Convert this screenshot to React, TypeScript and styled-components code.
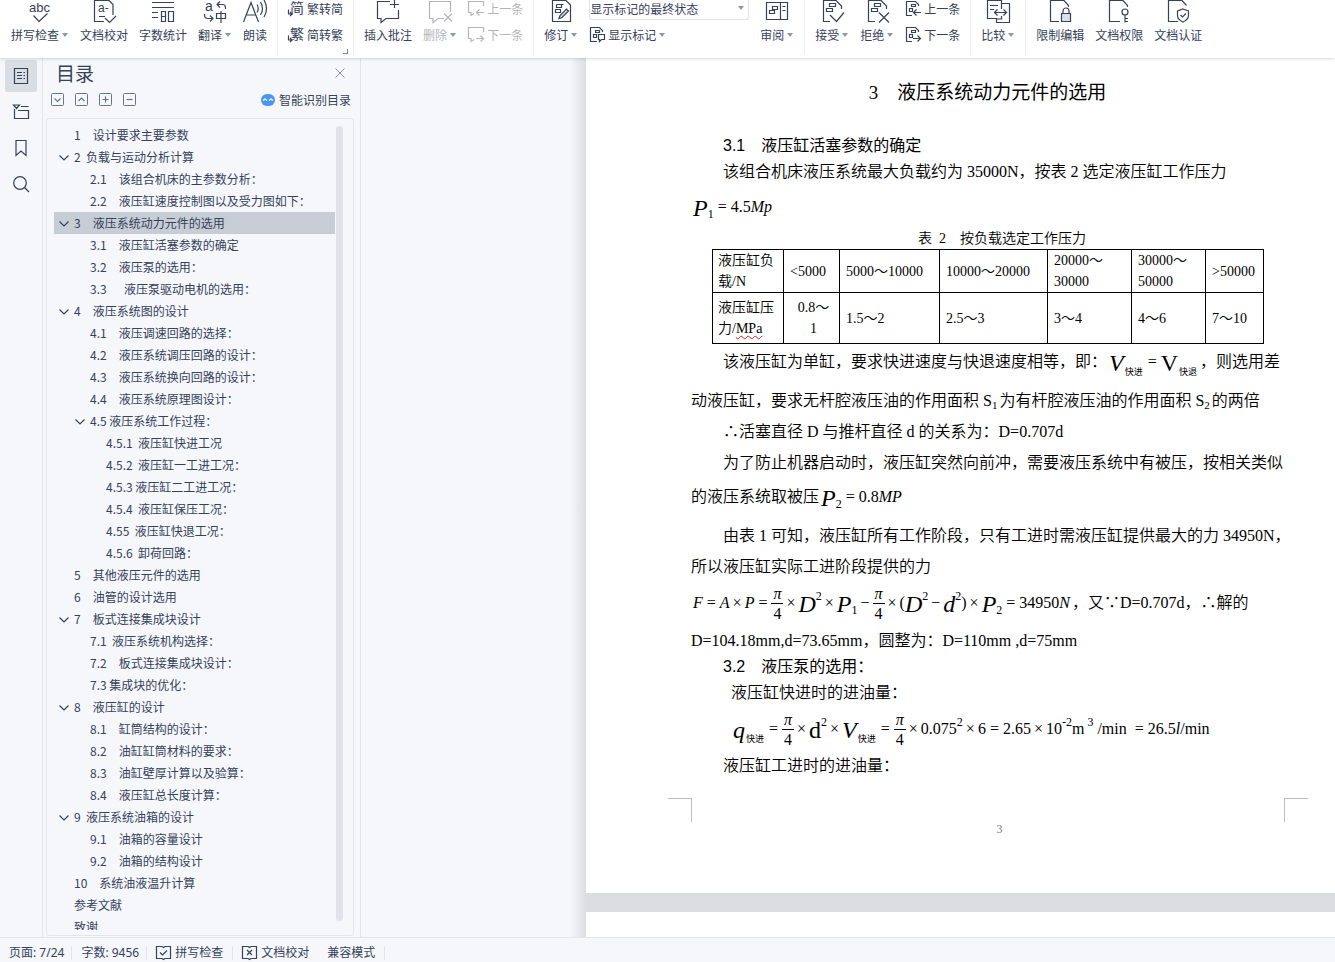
import React from 'react';
import styled, { createGlobalStyle, css } from 'styled-components';

const ink = '#36415a';
const faded = '#b4b5ba';
const surface = '#f5f7fa';
const line = '#e2e5ea';

const GlobalStyle = createGlobalStyle`
  *, *::before, *::after { box-sizing: border-box; }
  body {
    margin: 0;
    background: ${surface};
    font-family: "Noto Sans CJK SC", "Noto Sans", sans-serif;
    font-size: 12px;
    color: ${ink};
  }
  button, select { font: inherit; color: inherit; }
`;

const Window = styled.div`
  display: flex;
  flex-direction: column;
  height: 100vh;
  overflow: hidden;
`;

/* ---------- ribbon ---------- */

const Ribbon = styled.header`
  position: relative;
  z-index: 1;
  display: flex;
  flex: none;
  height: 58px;
  padding: 0 0 3px 1px;
  background: #fff;
  box-shadow: 0 1px 3px rgba(40, 50, 70, 0.18);
`;

const Group = styled.div<{ $last?: boolean }>`
  position: relative;
  display: flex;
  align-items: flex-start;
  gap: 11px;
  padding: 0 10px;
  border-right: ${(p) => (p.$last ? 'none' : '1px solid #eceef1')};
`;

const plainButton = css`
  border: 0;
  padding: 0;
  background: none;
  white-space: nowrap;
  cursor: pointer;
`;

const LargeButton = styled.button`
  ${plainButton}
  display: flex;
  flex-direction: column;
  align-items: center;
  gap: 3px;
  line-height: 16px;
  &:disabled { color: ${faded}; }
`;

const SmallButton = styled.button`
  ${plainButton}
  display: flex;
  align-items: center;
  gap: 3px;
  height: 17px;
  line-height: 17px;
  &:disabled { color: ${faded}; }
`;

const Stack = styled.div`
  display: flex;
  flex-direction: column;
  gap: 9px;
`;

const Label = styled.span`
  display: flex;
  align-items: center;
`;

const Caret = styled.span`
  width: 6px;
  margin: 0 1px 0 3px;
  border: 3px solid transparent;
  border-top: 4px solid #8d97ab;
  border-bottom: 0;
`;

const Launcher = styled.button`
  ${plainButton}
  position: absolute;
  right: 5px;
  bottom: 1px;
  width: 5px;
  height: 5px;
  border-right: 1px solid #7d8799;
  border-bottom: 1px solid #7d8799;
`;

const SelectBox = styled.label`
  display: flex;
  align-items: center;
  width: 160px;
  height: 20px;
  margin-bottom: -3px;
  padding: 0 3px 3px 0;
  border: 1px solid #dfe2e8;
  border-top: 0;
  border-radius: 0 0 3px 3px;
`;

const ModeSelect = styled.select`
  flex: 1;
  min-width: 0;
  height: 17px;
  padding: 0;
  border: 0;
  outline: 0;
  background: none;
  appearance: none;
  line-height: 17px;
`;

const Svg = styled.svg`
  display: block;
  flex: none;
  overflow: visible;
  fill: none;
  stroke: currentColor;
  stroke-width: 1.2;
  text { fill: currentColor; stroke: none; }
`;

const Big = ({ children }: { children: React.ReactNode }) => (
  <Svg width="24" height="24" viewBox="0 0 24 24" aria-hidden="true">{children}</Svg>
);
const Small = ({ children }: { children: React.ReactNode }) => (
  <Svg width="16" height="17" viewBox="0 0 16 17" aria-hidden="true">{children}</Svg>
);

const uiFace = '"Liberation Sans", sans-serif';
const cjkFace = '"Noto Sans CJK SC", sans-serif';

const revisionSheet = (
  <>
    <path d="M10 21.500H3.500V.5H16l5.500 5.500V9" />
    <path d="M9.500 3.500h6v3h-6zM6.500 8.500h6v3h-6z" />
  </>
);

const bigIcons: Record<string, React.ReactNode> = {
  spell: (
    <>
      <text x="1" y="12" fontSize="13" fontFamily={uiFace}>abc</text>
      <path d="M5.500 15.500l5.500 6 8.500-8" />
    </>
  ),
  proof: (
    <>
      <path d="M12 21.500H2.500V.5H17l4 4V15M7 16.500h6" />
      <text x="6" y="12" fontSize="12" fontFamily={uiFace}>a-</text>
      <path d="M13 18l4.500 4.500L24 16" />
    </>
  ),
  count: <path d="M1 2.500h22M1 7.500h22M1 12.500h6M1 17.500h6M10.500 11.500h4v10h-4zM10.500 16.500h4M17.500 11.500h5v10h-5z" />,
  translate: (
    <>
      <text x="2" y="11" fontSize="14" fontFamily={uiFace}>a</text>
      <path d="M14 4.500h5.500q3 0 3 3V9M17 1.500l-3 3 3 3M1.500 14v1q0 3.500 3.500 3.500h4.500M7 15.500l3 3-3 3" />
      <path d="M13.500 13.500h9v5h-9zM18 11v12" />
    </>
  ),
  read: (
    <>
      <path d="M.5 22L8 2.500 15.500 22M3.500 15h9" />
      <path d="M14 4.500q2.500 4 0 8M17.500 2q4 6.500 0 13M21 0q5 8.500 0 17" />
    </>
  ),
  comment: <path d="M14 1.500H1.500v17H5v4l5-4h12.500V10M18.500-1V8M14 4.500h9" />,
  remove: (
    <path d="M16 18.500h-6l-5 4v-4H1.500v-17h21V12M16 13.500l8 8M24 13.500l-8 8" />
  ),
  revise: (
    <>
      <path d="M17 .5H3.500v21h18V5zM7.500 4.500h7M7.500 4.500v3h5v-3M6.500 9.500h5v3h-5z" />
      <path d="M10 18.500l1-3 6.500-6.500 2 2-6.500 6.500z" fill="#d5d8df" />
    </>
  ),
  review: <path d="M1.500 2.500h21v17h-21zM15.500 2.500v17M7.500 6.500h5v3h-5zM4.500 10.500h5v3h-5zM17.500 6.500h3M17.500 10.500h3" />,
  accept: (
    <>
      {revisionSheet}
      <path d="M10 15l6.500 6.500L24 12.500" />
    </>
  ),
  reject: (
    <>
      {revisionSheet}
      <path d="M14 12.500l10 10M24 12.500l-10 10" />
    </>
  ),
  compare: (
    <path d="M15.500 3V.500h-14v18h9V22.500h13V3.500H15.500V9M15.500 16v3H10M4 5.500h8M4 9.500h4M8.500 12.500h12M11.500 9.500l-3 3 3 3M17.500 9.500l3 3-3 3" />
  ),
  lock: (
    <>
      <path d="M11 21.500H2.500V.5H16l4.500 5V7" />
      <path d="M13.500 13.500h9v8h-9z" fill="#dfe1e7" />
      <path d="M15 13.500v-2.500a3 3 0 016 0v2.500" />
    </>
  ),
  key: (
    <>
      <path d="M13 21.500H2.500V.5H16l4.500 5V7" />
      <circle cx="18" cy="12" r="3" />
      <path d="M18 15v7.500M18 18.500h3M18 21.500h3" />
    </>
  ),
  shield: (
    <>
      <path d="M12 21.500H2.500V.5H16l4.500 5" />
      <path d="M17 9l5.500 2v4.500q0 4-5.500 6.500-5.500-2.500-5.500-6.500V11z" />
      <path d="M14.500 15l2 2 3.500-3.500" />
    </>
  ),
};

const bubble = <path d="M6 13.500l-3 2v-3H.5V1.500h15V6" />;
const smallSheet = <path d="M7 15.500H1.500V1.500h9l3 3V6M6.500 4.500h4v2h-4zM4.500 8.500h3v3h-3z" />;

const smallIcons: Record<string, React.ReactNode> = {
  simp: (
    <>
      <text x="2" y="13" fontSize="14" fontFamily={cjkFace}>简</text>
      <path d="M.5 9.500v4.500h3.500M2 12l2 2-2 2" />
    </>
  ),
  trad: (
    <>
      <text x="2" y="13" fontSize="14" fontFamily={cjkFace}>繁</text>
      <path d="M.5 9.500v4.500h3.500M2 12l2 2-2 2" />
    </>
  ),
  prevNote: <>{bubble}<path d="M8.500 12.500H16M11.500 9.500l-3 3 3 3" /></>,
  nextNote: <>{bubble}<path d="M8 12.500h7.500M12.500 9.500l3 3-3 3" /></>,
  prevRev: <>{smallSheet}<path d="M8.500 12.500H16M11.500 9.500l-3 3 3 3" /></>,
  nextRev: <>{smallSheet}<path d="M8 12.500h7.500M12.500 9.500l3 3-3 3" /></>,
  marks: (
    <path d="M8 15.500H1.500V1.500h9l3 3V6M6.500 4.500h4v2h-4zM4.500 8.500h3v3h-3zM9.500 8.500h6v5h-3l-2 2v-2h-1z" />
  ),
};

type ToolProps = { icon: string; text: string; menu?: boolean; disabled?: boolean };

const Tool = ({ icon, text, menu, disabled }: ToolProps) => (
  <LargeButton type="button" disabled={disabled}>
    <Big>{bigIcons[icon]}</Big>
    <Label>{text}{menu && <Caret />}</Label>
  </LargeButton>
);

const MiniTool = ({ icon, text, menu, disabled }: ToolProps) => (
  <SmallButton type="button" disabled={disabled}>
    <Small>{smallIcons[icon]}</Small>
    <Label>{text}{menu && <Caret />}</Label>
  </SmallButton>
);

/* ---------- side rail and outline ---------- */

const Body = styled.div`
  display: flex;
  flex: 1;
  min-height: 0;
`;

const Rail = styled.nav`
  display: flex;
  flex-direction: column;
  align-items: center;
  flex: none;
  gap: 4px;
  width: 43px;
  padding-top: 2px;
  border-right: 1px solid ${line};
`;

const RailButton = styled.button<{ $active?: boolean }>`
  ${plainButton}
  display: grid;
  place-items: center;
  width: 32px;
  height: 32px;
  border-radius: 2px;
  background: ${(p) => (p.$active ? '#d9dde4' : 'none')};
`;

const Panel = styled.aside`
  display: flex;
  flex-direction: column;
  flex: none;
  width: 318px;
  padding: 0 6px 1px 3px;
  border-right: 1px solid ${line};
`;

const PanelHead = styled.div`
  display: flex;
  align-items: center;
  justify-content: space-between;
  height: 29px;
  padding: 0 9px 0 10px;
`;

const PanelTitle = styled.h2`
  margin: 0;
  font-size: 19px;
  font-weight: 400;
  line-height: 28px;
`;

const IconButton = styled.button`
  ${plainButton}
  display: grid;
  place-items: center;
`;

const PanelTools = styled.div`
  display: flex;
  align-items: center;
  gap: 11px;
  height: 25px;
  padding: 0 3px 0 5px;
  color: #6c7584;
`;

const SmartButton = styled.button`
  ${plainButton}
  display: flex;
  align-items: center;
  gap: 4px;
  margin-left: auto;
  color: ${ink};
`;

const TreeBox = styled.div`
  display: flex;
  flex: 1;
  min-height: 0;
  margin-top: 6px;
  padding: 5px 10px 5px 7px;
  border: 1px solid ${line};
  border-radius: 3px;
`;

const Tree = styled.ul`
  flex: 1;
  margin: 0;
  padding: 0;
  overflow: hidden;
  list-style: none;
`;

const Row = styled.button<{ $level: number; $active: boolean }>`
  ${plainButton}
  display: flex;
  align-items: center;
  gap: 5px;
  width: 100%;
  height: 22px;
  padding-left: ${(p) => p.$level * 16 - 11}px;
  background: ${(p) => (p.$active ? '#c6cdd5' : 'none')};
  line-height: 22px;
  white-space: pre;
  text-align: left;
`;

const Twist = styled.span`
  display: grid;
  place-items: center;
  width: 10px;
  height: 10px;
`;

const Thumb = styled.div`
  width: 7px;
  margin: 2px 0 9px 1px;
  border-radius: 4px;
  background: #e0e3e9;
`;

type Entry = [level: number, text: string, open?: boolean];

const outline: Entry[] = [
  [1, '1　设计要求主要参数'],
  [1, '2  负载与运动分析计算', true],
  [2, '2.1　该组合机床的主参数分析：'],
  [2, '2.2　液压缸速度控制图以及受力图如下：'],
  [1, '3　液压系统动力元件的选用', true],
  [2, '3.1　液压缸活塞参数的确定'],
  [2, '3.2　液压泵的选用：'],
  [2, '3.3　  液压泵驱动电机的选用：'],
  [1, '4　液压系统图的设计', true],
  [2, '4.1　液压调速回路的选择：'],
  [2, '4.2　液压系统调压回路的设计：'],
  [2, '4.3　液压系统换向回路的设计：'],
  [2, '4.4　液压系统原理图设计：'],
  [2, '4.5 液压系统工作过程：', true],
  [3, '4.5.1  液压缸快进工况'],
  [3, '4.5.2  液压缸一工进工况：'],
  [3, '4.5.3 液压缸二工进工况：'],
  [3, '4.5.4  液压缸保压工况：'],
  [3, '4.55  液压缸快退工况：'],
  [3, '4.5.6  卸荷回路：'],
  [1, '5　其他液压元件的选用'],
  [1, '6　油管的设计选用'],
  [1, '7　板式连接集成块设计', true],
  [2, '7.1  液压系统机构选择：'],
  [2, '7.2　板式连接集成块设计：'],
  [2, '7.3 集成块的优化：'],
  [1, '8　液压缸的设计', true],
  [2, '8.1　缸筒结构的设计：'],
  [2, '8.2　油缸缸筒材料的要求：'],
  [2, '8.3　油缸壁厚计算以及验算：'],
  [2, '8.4　液压缸总长度计算：'],
  [1, '9  液压系统油箱的设计', true],
  [2, '9.1　油箱的容量设计'],
  [2, '9.2　油箱的结构设计'],
  [1, '10　系统油液温升计算'],
  [1, '参考文献'],
  [1, '致谢'],
];

const BoxIcon = ({ d }: { d: string }) => (
  <Svg width="13" height="13" viewBox="0 0 13 13" aria-hidden="true">
    <rect x=".5" y=".5" width="12" height="12" rx="1" strokeWidth="1" />
    <path d={d} />
  </Svg>
);

/* ---------- document ---------- */

const Desk = styled.main`
  flex: 1;
  min-width: 0;
  padding-left: 225px;
  overflow: hidden;
  background: linear-gradient(to right, ${surface} 209px, #dcdde0 225px);
`;

const Sheet = styled.article`
  margin-bottom: 19px;
  padding: 15px 51px 57px 105px;
  background: #fff;
  color: #000;
  font-family: "Liberation Serif", "Noto Sans CJK SC", serif;
  font-size: 16px;
  font-weight: 350;
`;

const NextSheet = styled(Sheet)`
  height: 200px;
  margin: 0;
`;

const Chapter = styled.h1`
  margin: 0 0 20px;
  font-size: 19px;
  font-weight: 400;
  line-height: 40px;
  text-align: center;
`;

const Section = styled.h2`
  margin: 0;
  padding-left: 32px;
  font-family: "Liberation Sans", "Noto Sans CJK SC", sans-serif;
  font-size: 16px;
  font-weight: 400;
  line-height: 26px;
`;

const Line = styled.p<{ $h: number; $indent?: number; $after?: number }>`
  margin: 0 0 ${(p) => p.$after ?? 0}px;
  padding-left: ${(p) => p.$indent ?? 0}px;
  line-height: ${(p) => p.$h}px;
  white-space: pre;
`;

const Table = styled.table`
  width: 552px;
  margin: 0 0 0 21px;
  border-collapse: collapse;
  table-layout: fixed;
  font-size: 14px;
  line-height: 21px;
  caption {
    line-height: 21px;
    text-indent: 28px;
    white-space: pre;
  }
  td, th {
    padding: 0 0 0 6px;
    border: 1px solid #000;
    font-weight: inherit;
    text-align: left;
    vertical-align: middle;
  }
  th { padding-left: 5px; }
  tr { height: 43px; }
  tr + tr { height: 51px; }
`;

const Centered = styled.span`
  display: block;
  padding-right: 2px;
  text-align: center;
`;

const Misspelt = styled.span`
  text-decoration: underline wavy #e02020 1px;
  text-underline-offset: 2px;
`;

const Formula = styled.span`
  padding: 0 2px;
`;

const Large = styled.span<{ $upright?: boolean }>`
  font-size: 24px;
  font-style: ${(p) => (p.$upright ? 'normal' : 'italic')};
  line-height: 0;
  vertical-align: -4px;
`;

const Upper = styled.span`
  font-size: 12px;
  line-height: 0;
  vertical-align: 8px;
`;

const Lower = styled.span`
  font-size: 12px;
  line-height: 0;
  vertical-align: -6px;
`;

const Index = styled.span`
  padding-right: 2px;
  font-size: 11px;
  line-height: 0;
  vertical-align: -3px;
`;

const Word = styled.span`
  padding: 0 1px;
  font-size: 9px;
  font-weight: 400;
  line-height: 0;
  vertical-align: -8px;
`;

const Op = styled.span<{ $wide?: boolean }>`
  margin: 0 ${(p) => (p.$wide ? 4 : 3)}px;
`;

const FractionBox = styled.span`
  display: inline-flex;
  flex-direction: column;
  width: 12px;
  line-height: 20px;
  text-align: center;
  vertical-align: middle;
  i { line-height: 18px; border-bottom: 1px solid #000; }
`;

const QuarterPi = () => (
  <FractionBox><i>π</i><span>4</span></FractionBox>
);
const Eq = () => <Op $wide>=</Op>;
const Times = () => <Op>×</Op>;
const Minus = () => <Op>−</Op>;

const Corners = styled.div`
  display: flex;
  justify-content: space-between;
  margin: 18px -24px 0 -23px;
`;

const Corner = styled.span<{ $side: 'left' | 'right' }>`
  width: 24px;
  height: 24px;
  border-top: 1px solid #bfbfbf;
  ${(p) => (p.$side === 'left' ? 'border-right' : 'border-left')}: 1px solid #bfbfbf;
`;

const PageNumber = styled.div`
  color: #7a7a7a;
  font-size: 12px;
  line-height: 14px;
  text-align: center;
  text-indent: 24px;
`;

/* ---------- status bar ---------- */

const Status = styled.footer`
  display: flex;
  align-items: center;
  flex: none;
  height: 25px;
  padding-top: 5px;
  border-top: 1px solid ${line};
  line-height: 18px;
  font-family: "Noto Sans", "Noto Sans CJK SC", sans-serif;
  white-space: nowrap;
`;

const StatusItem = styled.span`
  padding: 0 7px 0 9px;
`;

const StatusButton = styled.button`
  ${plainButton}
  display: flex;
  align-items: center;
  gap: 4px;
  padding: 0 9px;
`;

const Divider = styled.span`
  width: 1px;
  height: 14px;
  background: ${line};
`;

const StatusIcon = ({ d }: { d: string }) => (
  <Svg width="15" height="14" viewBox="0 0 15 14" aria-hidden="true">
    <path d="M6 .5l1.500 1 1.500-1h5.500v12H9l-1.500 1-1.500-1H.5v-12z" />
    <path d={d} />
  </Svg>
);

export default function App() {
  return (
    <Window lang="zh-CN">
      <GlobalStyle />
      <Ribbon>
        <Group>
          <Tool icon="spell" text="拼写检查" menu />
          <Tool icon="proof" text="文档校对" />
          <Tool icon="count" text="字数统计" />
          <Tool icon="translate" text="翻译" menu />
          <Tool icon="read" text="朗读" />
        </Group>
        <Group>
          <Stack>
            <MiniTool icon="simp" text="繁转简" />
            <MiniTool icon="trad" text="简转繁" />
          </Stack>
          <Launcher type="button" aria-label="更多" />
        </Group>
        <Group>
          <Tool icon="comment" text="插入批注" />
          <Tool icon="remove" text="删除" menu disabled />
          <Stack>
            <MiniTool icon="prevNote" text="上一条" disabled />
            <MiniTool icon="nextNote" text="下一条" disabled />
          </Stack>
        </Group>
        <Group>
          <Tool icon="revise" text="修订" menu />
          <Stack>
            <SelectBox>
              <ModeSelect aria-label="显示标记的状态" defaultValue="final">
                <option value="final">显示标记的最终状态</option>
              </ModeSelect>
              <Caret />
            </SelectBox>
            <MiniTool icon="marks" text="显示标记" menu />
          </Stack>
          <Tool icon="review" text="审阅" menu />
        </Group>
        <Group>
          <Tool icon="accept" text="接受" menu />
          <Tool icon="reject" text="拒绝" menu />
          <Stack>
            <MiniTool icon="prevRev" text="上一条" />
            <MiniTool icon="nextRev" text="下一条" />
          </Stack>
        </Group>
        <Group>
          <Tool icon="compare" text="比较" menu />
        </Group>
        <Group $last>
          <Tool icon="lock" text="限制编辑" />
          <Tool icon="key" text="文档权限" />
          <Tool icon="shield" text="文档认证" />
        </Group>
      </Ribbon>

      <Body>
        <Rail>
          <RailButton type="button" $active aria-label="目录">
            <Svg width="16" height="16" viewBox="0 0 16 16">
              <path d="M1.500.5h13v15h-13zM4 4.500h5M10.500 4.500H12M4 7.500h5M10.500 7.500H12M4 10.500h5M10.500 10.500H12" />
            </Svg>
          </RailButton>
          <RailButton type="button" aria-label="章节">
            <Svg width="16" height="16" viewBox="0 0 16 16">
              <path d="M.5 1h6l-3 3.500zM8 2.500h7.500M1.500 5v9.500h14v-8H5" />
            </Svg>
          </RailButton>
          <RailButton type="button" aria-label="书签">
            <Svg width="16" height="16" viewBox="0 0 16 16">
              <path d="M3 .5h10v15l-5-4.500-5 4.500z" />
            </Svg>
          </RailButton>
          <RailButton type="button" aria-label="查找">
            <Svg width="16" height="16" viewBox="0 0 16 16">
              <circle cx="7" cy="7" r="6.300" />
              <path d="M11.500 11.500l4.500 4.500" />
            </Svg>
          </RailButton>
        </Rail>

        <Panel>
          <PanelHead>
            <PanelTitle>目录</PanelTitle>
            <IconButton type="button" aria-label="关闭">
              <Svg width="10" height="10" viewBox="0 0 10 10" color="#8a95ab">
                <path d="M.5.5l9 9M9.500.5l-9 9" strokeWidth="1" />
              </Svg>
            </IconButton>
          </PanelHead>
          <PanelTools>
            <IconButton type="button" aria-label="展开"><BoxIcon d="M3.500 5.500l3 3 3-3" /></IconButton>
            <IconButton type="button" aria-label="收起"><BoxIcon d="M3.500 8l3-3 3 3" /></IconButton>
            <IconButton type="button" aria-label="增加级别"><BoxIcon d="M3.500 6.500h6M6.500 3.500v6" /></IconButton>
            <IconButton type="button" aria-label="减少级别"><BoxIcon d="M3.500 6.500h6" /></IconButton>
            <SmartButton type="button">
              <Svg width="14" height="12" viewBox="0 0 14 12" aria-hidden="true">
                <rect width="14" height="12" rx="6" fill="#4a97f0" stroke="none" />
                <path d="M2 6.500l2-1.500 2 1.500M8 6.500L10 5l2 1.500" stroke="#fff" />
              </Svg>
              智能识别目录
            </SmartButton>
          </PanelTools>
          <TreeBox>
            <Tree>
              {outline.map(([level, text, open]) => (
                <li key={text}>
                  <Row type="button" $level={level} $active={text.startsWith('3　')}>
                    <Twist>
                      {open && (
                        <Svg width="10" height="10" viewBox="0 0 10 10" aria-hidden="true">
                          <path d="M.5 3.500L5 8l4.500-4.500" />
                        </Svg>
                      )}
                    </Twist>
                    {text}
                  </Row>
                </li>
              ))}
            </Tree>
            <Thumb />
          </TreeBox>
        </Panel>

        <Desk>
          <Sheet>
            <Chapter>3　液压系统动力元件的选用</Chapter>
            <Section>3.1　液压缸活塞参数的确定</Section>
            <Line $h={26} $indent={32}>该组合机床液压系统最大负载约为 35000N，按表 2 选定液压缸工作压力</Line>
            <Line $h={43}>
              <Formula><Large>P</Large><Lower>1</Lower><Eq />4.5<i>Mp</i></Formula>
            </Line>
            <Table>
              <caption>表  2　按负载选定工作压力</caption>
              <colgroup>
                <col style={{ width: 71 }} />
                <col style={{ width: 56 }} />
                <col style={{ width: 100 }} />
                <col style={{ width: 108 }} />
                <col style={{ width: 84 }} />
                <col style={{ width: 74 }} />
                <col />
              </colgroup>
              <tbody>
                <tr>
                  <th scope="row">液压缸负<br />载/N</th>
                  <td>&lt;5000</td>
                  <td>5000～10000</td>
                  <td>10000～20000</td>
                  <td>20000～<br />30000</td>
                  <td>30000～<br />50000</td>
                  <td>&gt;50000</td>
                </tr>
                <tr>
                  <th scope="row">液压缸压<br />力/<Misspelt>MPa</Misspelt></th>
                  <td><Centered>0.8～<br />1</Centered></td>
                  <td>1.5～2</td>
                  <td>2.5～3</td>
                  <td>3～4</td>
                  <td>4～6</td>
                  <td>7～10</td>
                </tr>
              </tbody>
            </Table>
            <Line $h={36} $indent={32} $after={5}>
              该液压缸为单缸，要求快进速度与快退速度相等，即：
              <Formula>
                <Large>V</Large><Word>快进</Word><Eq /><Large $upright>V</Large><Word>快退</Word>
              </Formula>
              ，则选用差
            </Line>
            <Line $h={31}>
              动液压缸，要求无杆腔液压油的作用面积 S<Index>1</Index>为有杆腔液压油的作用面积 S<Index>2</Index>的两倍
            </Line>
            <Line $h={31} $indent={32}>∴活塞直径 D 与推杆直径 d 的关系为：D=0.707d</Line>
            <Line $h={31} $indent={32}>为了防止机器启动时，液压缸突然向前冲，需要液压系统中有被压，按相关类似</Line>
            <Line $h={38} $after={4}>
              的液压系统取被压
              <Formula><Large>P</Large><Lower>2</Lower><Eq />0.8<i>MP</i></Formula>
            </Line>
            <Line $h={31} $indent={32}>由表 1 可知，液压缸所有工作阶段，只有工进时需液压缸提供最大的力 34950N，</Line>
            <Line $h={31}>所以液压缸实际工进阶段提供的力</Line>
            <Line $h={41} $after={4}>
              <Formula>
                <i>F</i><Eq /><i>A</i><Times /><i>P</i><Eq /><QuarterPi /><Times />
                <Large>D</Large><Upper>2</Upper><Times /><Large>P</Large><Lower>1</Lower><Minus />
                <QuarterPi /><Times />(<Large>D</Large><Upper>2</Upper><Minus /><Large>d</Large><Upper>2</Upper>)<Times />
                <Large>P</Large><Lower>2</Lower><Eq />34950<i>N</i>
              </Formula>
              ，又∵D=0.707d，∴解的
            </Line>
            <Line $h={26}>D=104.18mm,d=73.65mm，圆整为：D=110mm ,d=75mm</Line>
            <Section>3.2　液压泵的选用：</Section>
            <Line $h={26} $indent={40}>液压缸快进时的进油量：</Line>
            <Line $h={46} $indent={40}>
              <Formula>
                <Large>q</Large><Word>快进</Word><Eq /><QuarterPi /><Times />
                <Large $upright>d</Large><Upper>2</Upper><Times /><Large>V</Large><Word>快进</Word><Eq />
                <QuarterPi /><Times />0.075<Upper>2</Upper><Times />6<Eq />2.65<Times />10<Upper>-2</Upper>
                m<Upper> 3</Upper> /min <Eq />26.5<i>l</i>/min
              </Formula>
            </Line>
            <Line $h={28} $indent={32}>液压缸工进时的进油量：</Line>
            <Corners>
              <Corner $side="left" />
              <Corner $side="right" />
            </Corners>
            <PageNumber>3</PageNumber>
          </Sheet>
          <NextSheet />
        </Desk>
      </Body>

      <Status>
        <StatusItem>页面: 7/24</StatusItem>
        <Divider />
        <StatusItem>字数: 9456</StatusItem>
        <Divider />
        <StatusButton type="button"><StatusIcon d="M4 6.500L6.500 9 11 4.500" />拼写检查</StatusButton>
        <Divider />
        <StatusButton type="button"><StatusIcon d="M5 4l5 5M10 4L5 9" />文档校对</StatusButton>
        <StatusButton type="button">兼容模式</StatusButton>
        <Divider />
      </Status>
    </Window>
  );
}
